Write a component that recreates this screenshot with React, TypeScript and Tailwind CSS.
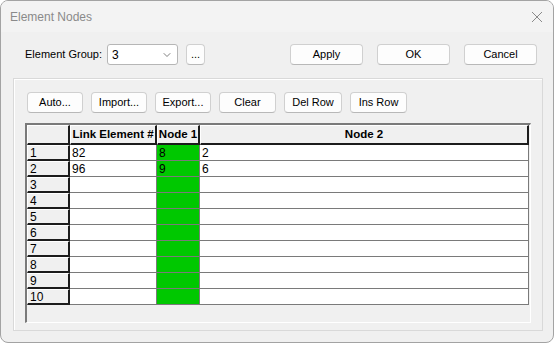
import { ChevronDown } from 'lucide-react';

const rows = [
  { n: 1, link: '82', node1: '8', node2: '2' },
  { n: 2, link: '96', node1: '9', node2: '6' },
  { n: 3, link: '', node1: '', node2: '' },
  { n: 4, link: '', node1: '', node2: '' },
  { n: 5, link: '', node1: '', node2: '' },
  { n: 6, link: '', node1: '', node2: '' },
  { n: 7, link: '', node1: '', node2: '' },
  { n: 8, link: '', node1: '', node2: '' },
  { n: 9, link: '', node1: '', node2: '' },
  { n: 10, link: '', node1: '', node2: '' },
];

function Btn({ label, w }: { label: string; w: string }) {
  return (
    <button
      className={`${w} h-[21px] shrink-0 rounded-[4px] border border-[#d0d0d0] border-b-[#b8b8b8] bg-[#fdfdfd] text-[11px] leading-none text-black whitespace-nowrap flex items-center justify-center`}
    >
      {label}
    </button>
  );
}

function HeadCell({ w, children, center }: { w: string; children?: React.ReactNode; center?: boolean }) {
  return (
    <div
      className={`${w} h-full shrink-0 bg-[#f0f0f0] border-t border-l border-t-white border-l-white border-r-2 border-b-2 border-r-[#1c1c1c] border-b-[#1c1c1c] whitespace-nowrap flex items-center ${
        center ? 'justify-center font-bold text-[11.5px]' : 'pl-[2px]'
      }`}
    >
      {children}
    </div>
  );
}

export default function App() {
  return (
    <div
      className="w-[554px] h-[343px] bg-white"
      style={{ fontFamily: '"Liberation Sans", Arial, sans-serif' }}
    >
      <div className="w-[554px] h-[343px] rounded-[8px] border border-[#a3a3a3] bg-[#f0f0f0] overflow-hidden flex flex-col">
        <div className="h-[31px] bg-[#f3f3f3] flex items-center justify-between pl-[9px] pr-[10px] shrink-0">
          <span className="text-[12px] text-[#8a8a8a]">Element Nodes</span>
          <svg width="12" height="12" viewBox="0 0 12 12">
            <path d="M1 1 L11 11 M11 1 L1 11" stroke="#8a8a8a" strokeWidth="1" />
          </svg>
        </div>

        <div className="flex items-center h-[21px] mt-[12px] pl-[24px] text-[11px] text-black">
          <span className="w-[82px] shrink-0 whitespace-nowrap">Element Group:</span>
          <div className="w-[71px] h-[21px] rounded-[3px] border border-[#b6b6b6] bg-white flex items-center justify-between pl-[4px] pr-[4px] text-[12px]">
            <span>3</span>
            <ChevronDown className="w-[12px] h-[12px] text-[#555]" strokeWidth={1.5} />
          </div>
          <div className="ml-[8px]">
            <Btn label="..." w="w-[19px]" />
          </div>
          <div className="ml-[85px] flex gap-[14px]">
            <Btn label="Apply" w="w-[73px]" />
            <Btn label="OK" w="w-[73px]" />
            <Btn label="Cancel" w="w-[73px]" />
          </div>
        </div>

        <div className="ml-[12px] mt-[13px] w-[530px] h-[253px] border border-[#d9d9d9] shadow-[inset_1px_1px_0_#ffffff] flex flex-col">
          <div className="flex gap-[8px] mt-[13px] ml-[13px]">
            <Btn label="Auto..." w="w-[56px]" />
            <Btn label="Import..." w="w-[56px]" />
            <Btn label="Export..." w="w-[56px]" />
            <Btn label="Clear" w="w-[57px]" />
            <Btn label="Del Row" w="w-[58px]" />
            <Btn label="Ins Row" w="w-[57px]" />
          </div>

          <div className="ml-[11px] mt-[10px] w-[506px] h-[200px] border-t-2 border-l-2 border-t-[#7a7a7a] border-l-[#7a7a7a] border-r border-b border-r-white border-b-white bg-[#f0f0f0] text-[12px] text-black flex flex-col">
            <div className="flex h-[20px] shrink-0">
              <HeadCell w="w-[43px]" />
              <HeadCell w="w-[87px]" center>
                Link Element #
              </HeadCell>
              <HeadCell w="w-[43px]" center>
                Node 1
              </HeadCell>
              <HeadCell w="w-[329px]" center>
                Node 2
              </HeadCell>
            </div>
            {rows.map(r => (
              <div key={r.n} className="flex h-[16px] shrink-0">
                <HeadCell w="w-[43px]">{r.n}</HeadCell>
                <div className="w-[87px] h-full shrink-0 bg-white border-r border-b border-[#7a7a7a] pl-[2px] flex items-center">
                  {r.link}
                </div>
                <div className="w-[43px] h-full shrink-0 bg-[#00c800] border-r border-b border-[#7a7a7a] pl-[2px] flex items-center">
                  {r.node1}
                </div>
                <div className="w-[329px] h-full shrink-0 bg-white border-r border-b border-[#7a7a7a] pl-[2px] flex items-center">
                  {r.node2}
                </div>
              </div>
            ))}
          </div>
        </div>
      </div>
    </div>
  );
}
